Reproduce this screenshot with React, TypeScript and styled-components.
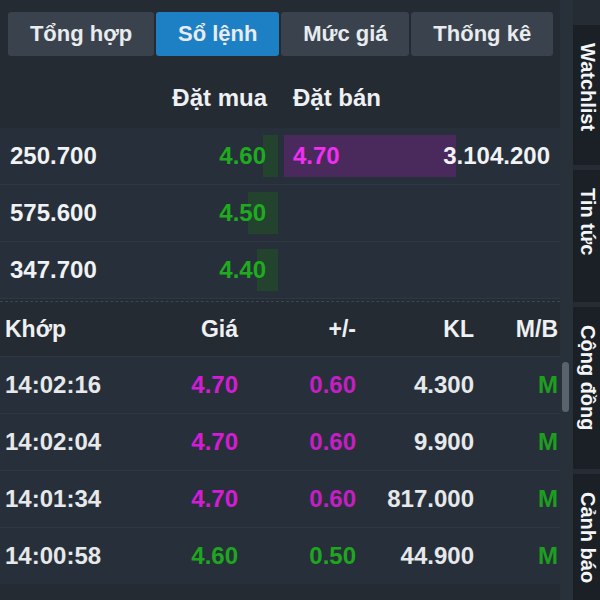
import { createGlobalStyle, styled } from "styled-components";

const GlobalStyle = createGlobalStyle`
  html, body {
    margin: 0;
    padding: 0;
    background: #242b33;
  }
  * {
    box-sizing: border-box;
  }
`;

type BookRow = {
  buyVol: string;
  buyPrice: string;
  buyBar: number;
  sellPrice?: string;
  sellVol?: string;
  sellBar?: number;
};

type Trade = {
  time: string;
  price: string;
  change: string;
  vol: string;
  side: string;
  up: boolean;
};

const tabs = ["Tổng hợp", "Sổ lệnh", "Mức giá", "Thống kê"];

const book: BookRow[] = [
  { buyVol: "250.700", buyPrice: "4.60", buyBar: 15, sellPrice: "4.70", sellVol: "3.104.200", sellBar: 172 },
  { buyVol: "575.600", buyPrice: "4.50", buyBar: 30 },
  { buyVol: "347.700", buyPrice: "4.40", buyBar: 21 },
];

const trades: Trade[] = [
  { time: "14:02:16", price: "4.70", change: "0.60", vol: "4.300", side: "M", up: true },
  { time: "14:02:04", price: "4.70", change: "0.60", vol: "9.900", side: "M", up: true },
  { time: "14:01:34", price: "4.70", change: "0.60", vol: "817.000", side: "M", up: true },
  { time: "14:00:58", price: "4.60", change: "0.50", vol: "44.900", side: "M", up: false },
];

const sideTabs = [
  { label: "Watchlist", height: 140 },
  { label: "Tin tức", height: 132 },
  { label: "Cộng đồng", height: 162 },
  { label: "Cảnh báo", height: 150 },
];

export default function App() {
  return (
    <>
      <GlobalStyle />
      <Screen>
        <Main>
          <Tabs>
            {tabs.map((t) => (
              <Tab key={t} $active={t === "Sổ lệnh"}>
                {t}
              </Tab>
            ))}
          </Tabs>

          <BookHead>
            <BuyHead>Đặt mua</BuyHead>
            <SellHead>Đặt bán</SellHead>
          </BookHead>

          {book.map((r) => (
            <BookLine key={r.buyVol}>
              <BuySide>
                <BuyBar style={{ width: r.buyBar }} />
                <Volume>{r.buyVol}</Volume>
                <BuyPrice>{r.buyPrice}</BuyPrice>
              </BuySide>
              <SellSide>
                {r.sellBar ? <SellBar style={{ width: r.sellBar }} /> : null}
                <SellPrice>{r.sellPrice}</SellPrice>
                <SellVolume>{r.sellVol}</SellVolume>
              </SellSide>
            </BookLine>
          ))}

          <Divider />

          <TradeHead>
            <HeadCell $left>Khớp</HeadCell>
            <HeadCell>Giá</HeadCell>
            <HeadCell>+/-</HeadCell>
            <HeadCell>KL</HeadCell>
            <HeadCell>M/B</HeadCell>
          </TradeHead>

          {trades.map((t) => (
            <TradeLine key={t.time}>
              <Cell $left>{t.time}</Cell>
              <Cell $color={t.up ? "#d51cd5" : "#1fa61f"}>{t.price}</Cell>
              <Cell $color={t.up ? "#c41ec4" : "#1fa61f"}>{t.change}</Cell>
              <Cell>{t.vol}</Cell>
              <Cell $color="#1e9e1e">{t.side}</Cell>
            </TradeLine>
          ))}
        </Main>

        <Gutter>
          <Thumb />
        </Gutter>

        <Sidebar>
          <SideTop />
          {sideTabs.map((s) => (
            <SideTab key={s.label} $h={s.height}>
              <SideLabel>{s.label}</SideLabel>
            </SideTab>
          ))}
        </Sidebar>
      </Screen>
    </>
  );
}

const Screen = styled.div`
  width: 600px;
  height: 600px;
  overflow: hidden;
  display: flex;
  flex-direction: row;
  background: #242b33;
  font-family: "Liberation Sans", Arial, sans-serif;
  font-weight: 700;
  color: #eef0f2;
`;

const Main = styled.div`
  width: 560px;
  flex-shrink: 0;
  display: flex;
  flex-direction: column;
  padding-top: 12px;
`;

const Tabs = styled.div`
  display: flex;
  flex-direction: row;
  gap: 2px;
  padding: 0 7px 0 8px;
  height: 44px;
`;

const Tab = styled.div<{ $active?: boolean }>`
  flex: 1 1 auto;
  display: flex;
  align-items: center;
  justify-content: center;
  border-radius: 3px;
  font-size: 22px;
  font-weight: 700;
  color: #e8ecef;
  background: ${(p) => (p.$active ? "#1d7fc4" : "#3a434d")};
`;

const BookHead = styled.div`
  height: 72px;
  display: flex;
  flex-direction: row;
  align-items: flex-end;
  padding-bottom: 16px;
  font-size: 24px;
`;

const BuyHead = styled.div`
  width: 267px;
  text-align: right;
`;

const SellHead = styled.div`
  padding-left: 26px;
`;

const BookLine = styled.div`
  height: 57px;
  display: flex;
  flex-direction: row;
  align-items: center;
  background: #27303a;
  border-bottom: 1px solid #2e3742;
  font-size: 24px;
`;

const BuySide = styled.div`
  position: relative;
  width: 278px;
  height: 42px;
  display: flex;
  align-items: center;
  justify-content: space-between;
  padding: 0 12px 0 10px;
`;

const BuyBar = styled.div`
  position: absolute;
  right: 0;
  top: 0;
  bottom: 0;
  background: #23432f;
`;

const Volume = styled.span`
  position: relative;
  color: #f0f2f4;
`;

const BuyPrice = styled.span`
  position: relative;
  color: #1eab1e;
`;

const SellSide = styled.div`
  position: relative;
  margin-left: 6px;
  width: 266px;
  height: 42px;
  display: flex;
  align-items: center;
  justify-content: space-between;
  padding: 0 0 0 9px;
`;

const SellBar = styled.div`
  position: absolute;
  left: 0;
  top: 0;
  bottom: 0;
  background: #4a2a5c;
`;

const SellPrice = styled.span`
  position: relative;
  color: #f22ef2;
`;

const SellVolume = styled.span`
  position: relative;
  color: #f0f2f4;
`;

const Divider = styled.div`
  margin-top: 2px;
  border-top: 1px dashed #3b4652;
`;

const columns = "140px 98px 118px 118px 84px";

const TradeHead = styled.div`
  height: 54px;
  display: grid;
  grid-template-columns: ${columns};
  align-items: center;
  font-size: 23px;
`;

const HeadCell = styled.div<{ $left?: boolean }>`
  text-align: ${(p) => (p.$left ? "left" : "right")};
  padding-left: ${(p) => (p.$left ? "5px" : "0")};
  color: #eef0f2;
`;

const TradeLine = styled.div`
  height: 57px;
  display: grid;
  grid-template-columns: ${columns};
  align-items: center;
  background: #27303a;
  border-top: 1px solid #2e3742;
  font-size: 24px;
`;

const Cell = styled.div<{ $left?: boolean; $color?: string }>`
  text-align: ${(p) => (p.$left ? "left" : "right")};
  padding-left: ${(p) => (p.$left ? "5px" : "0")};
  color: ${(p) => p.$color ?? "#e6e8ea"};
`;

const Gutter = styled.div`
  position: relative;
  width: 13px;
  flex-shrink: 0;
  background: #28303a;
`;

const Thumb = styled.div`
  position: absolute;
  left: 2px;
  top: 362px;
  width: 7px;
  height: 50px;
  border-radius: 4px;
  background: #59636e;
`;

const Sidebar = styled.div`
  flex: 1;
  display: flex;
  flex-direction: column;
  gap: 5px;
  background: #262c33;
`;

const SideTop = styled.div`
  height: 20px;
  flex-shrink: 0;
`;

const SideTab = styled.div<{ $h: number }>`
  height: ${(p) => p.$h}px;
  flex-shrink: 0;
  background: #1b2026;
  display: flex;
  justify-content: center;
  padding-top: 18px;
  padding-left: 2px;
`;

const SideLabel = styled.span`
  writing-mode: vertical-rl;
  font-size: 20px;
  line-height: 22px;
  font-weight: 700;
  color: #f4f5f7;
  white-space: nowrap;
`;
